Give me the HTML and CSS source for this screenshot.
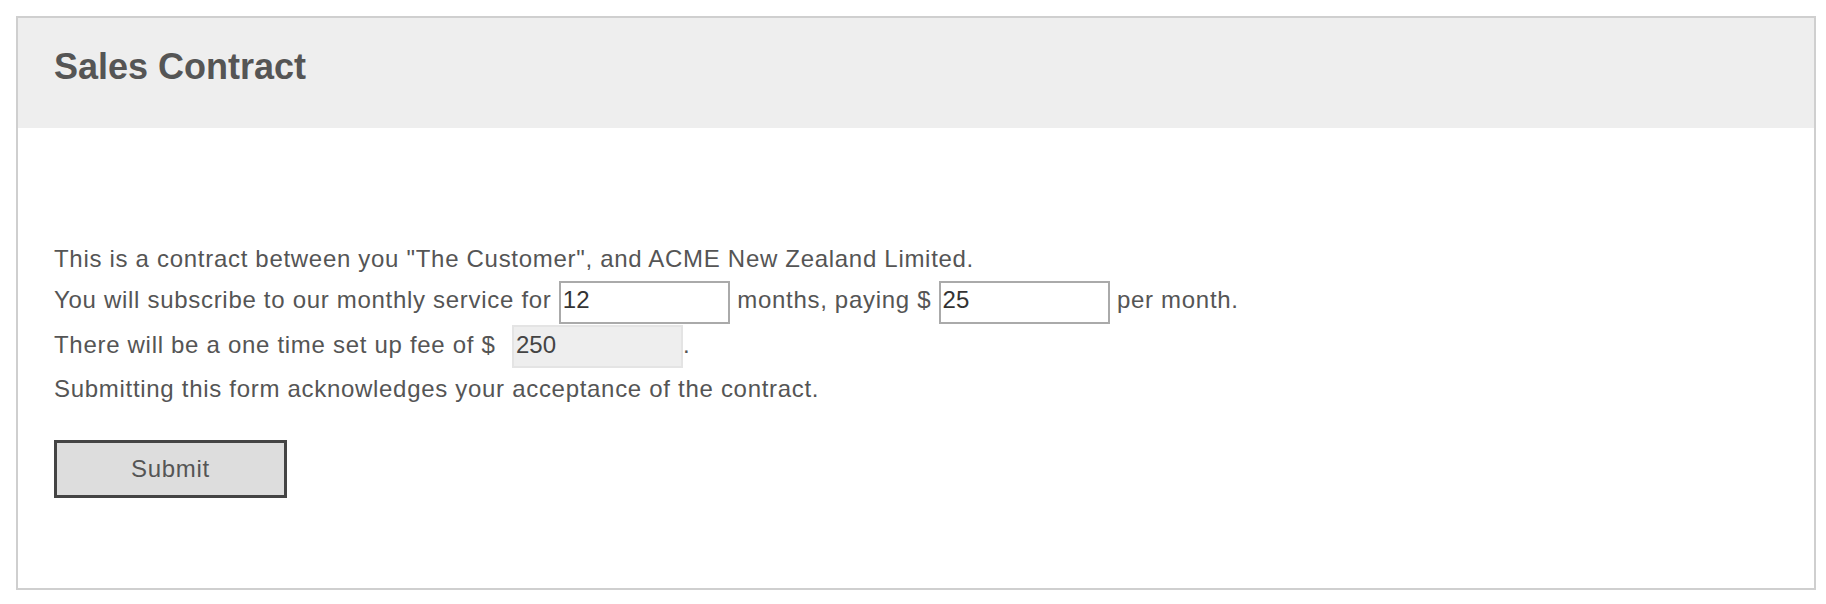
FILE: index.html
```html
<!DOCTYPE html>
<html lang="en">
<head>
  <meta charset="UTF-8" />
  <meta name="viewport" content="width=device-width, initial-scale=1" />
  <title>Sales Contract</title>
  <link rel="stylesheet" href="styles.css">
</head>
<body>

  <div class="card">
    <header class="card-header">
      <h1>Sales Contract</h1>
    </header>

    <form class="card-body" id="contractForm">
      <p class="contract">
        This is a contract between you "The Customer", and ACME New Zealand Limited.<br />
        You will subscribe to our monthly service for <input type="text" id="months" value="12" /> months, paying $ <input type="text" id="monthly" value="25" /> per month.<br />
        There will be a one time set up fee of $ <input type="text" id="setupFee" value="250" disabled />.<br />
        Submitting this form acknowledges your acceptance of the contract.
      </p>

      <button type="submit">Submit</button>
    </form>
  </div>

</body>
</html>
```

FILE: styles.css
```css
body { font-family: "Liberation Sans", Arial, sans-serif; margin: 16px 10px 16px 16px; background: white; }
.card {
  border: 2px solid #cfcfcf;
  box-shadow: 0 0 3px rgba(0,0,0,0.08);
}
.card-header { background: #eee; padding: 28px 36px 40px; }
.card-header h1 {
  margin: 0; font-size: 36px; line-height: 42px;
  font-weight: bold; color: #555;
}
.card-body { padding: 110px 36px 90px; }
.contract {
  margin: 0; font-size: 24px; line-height: 41px; color: #555;
  letter-spacing: 0.7px;
}
.contract input {
  font-family: inherit; font-size: 24px; color: #333;
  width: 171px; height: 43px; box-sizing: border-box;
  padding: 0 2px 4px; margin: 0;
  border: 2px solid #aaa; vertical-align: baseline;
}
.contract input:disabled {
  background: #eee; border-color: #e4e4e4; color: #444;
  margin-left: 9px;
}
button {
  font-family: inherit; font-size: 24px; color: #555;
  letter-spacing: 0.7px;
  background: #ddd; border: 3px solid #444;
  width: 233px; height: 58px; margin-top: 31px;
  cursor: pointer; display: block;
}
```
